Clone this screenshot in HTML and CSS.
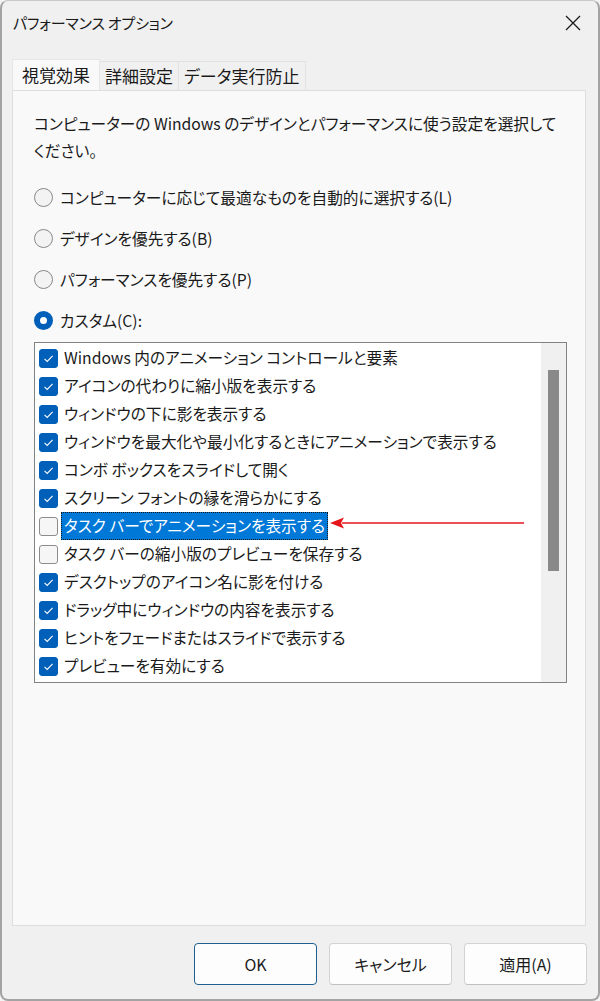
FILE: index.html
```html
<!DOCTYPE html>
<html lang="ja">
<head>
<meta charset="utf-8">
<title>パフォーマンス オプション</title>
<link rel="stylesheet" href="styles.css">
</head>
<body>
<div class="window">
  <div class="titlebar">
    <span class="title">パフォーマンス オプション</span>
    <svg class="close" width="18" height="18" viewBox="0 0 18 18"><path d="M2 2 L16 16 M16 2 L2 16" stroke="#1c1c1c" stroke-width="1.3" fill="none"/></svg>
  </div>
  <div class="tabs">
    <div class="tab active">視覚効果</div>
    <div class="tab">詳細設定</div>
    <div class="tab">データ実行防止</div>
  </div>
  <div class="panel">
    <p class="desc">コンピューターの Windows のデザインとパフォーマンスに使う設定を選択して<br>ください。</p>
    <div class="radios">
      <div class="radio-row"><span class="radio"></span><span>コンピューターに応じて最適なものを自動的に選択する(L)</span></div>
      <div class="radio-row"><span class="radio"></span><span>デザインを優先する(B)</span></div>
      <div class="radio-row"><span class="radio"></span><span>パフォーマンスを優先する(P)</span></div>
      <div class="radio-row"><span class="radio checked"></span><span>カスタム(C):</span></div>
    </div>
    <div class="listbox">
      <div class="items">
        <div class="item"><span class="cb on"><svg width="19" height="19" viewBox="0 0 19 19"><path d="M5.5 9.8 L8.2 12.4 L13.6 6.8" stroke="#fff" stroke-width="1.1" fill="none"/></svg></span><span class="lbl">Windows 内のアニメーション コントロールと要素</span></div>
        <div class="item"><span class="cb on"><svg width="19" height="19" viewBox="0 0 19 19"><path d="M5.5 9.8 L8.2 12.4 L13.6 6.8" stroke="#fff" stroke-width="1.1" fill="none"/></svg></span><span class="lbl">アイコンの代わりに縮小版を表示する</span></div>
        <div class="item"><span class="cb on"><svg width="19" height="19" viewBox="0 0 19 19"><path d="M5.5 9.8 L8.2 12.4 L13.6 6.8" stroke="#fff" stroke-width="1.1" fill="none"/></svg></span><span class="lbl">ウィンドウの下に影を表示する</span></div>
        <div class="item"><span class="cb on"><svg width="19" height="19" viewBox="0 0 19 19"><path d="M5.5 9.8 L8.2 12.4 L13.6 6.8" stroke="#fff" stroke-width="1.1" fill="none"/></svg></span><span class="lbl">ウィンドウを最大化や最小化するときにアニメーションで表示する</span></div>
        <div class="item"><span class="cb on"><svg width="19" height="19" viewBox="0 0 19 19"><path d="M5.5 9.8 L8.2 12.4 L13.6 6.8" stroke="#fff" stroke-width="1.1" fill="none"/></svg></span><span class="lbl">コンボ ボックスをスライドして開く</span></div>
        <div class="item"><span class="cb on"><svg width="19" height="19" viewBox="0 0 19 19"><path d="M5.5 9.8 L8.2 12.4 L13.6 6.8" stroke="#fff" stroke-width="1.1" fill="none"/></svg></span><span class="lbl">スクリーン フォントの縁を滑らかにする</span></div>
        <div class="item"><span class="cb"></span><span class="lbl selected">タスク バーでアニメーションを表示する</span></div>
        <div class="item"><span class="cb"></span><span class="lbl">タスク バーの縮小版のプレビューを保存する</span></div>
        <div class="item"><span class="cb on"><svg width="19" height="19" viewBox="0 0 19 19"><path d="M5.5 9.8 L8.2 12.4 L13.6 6.8" stroke="#fff" stroke-width="1.1" fill="none"/></svg></span><span class="lbl">デスクトップのアイコン名に影を付ける</span></div>
        <div class="item"><span class="cb on"><svg width="19" height="19" viewBox="0 0 19 19"><path d="M5.5 9.8 L8.2 12.4 L13.6 6.8" stroke="#fff" stroke-width="1.1" fill="none"/></svg></span><span class="lbl">ドラッグ中にウィンドウの内容を表示する</span></div>
        <div class="item"><span class="cb on"><svg width="19" height="19" viewBox="0 0 19 19"><path d="M5.5 9.8 L8.2 12.4 L13.6 6.8" stroke="#fff" stroke-width="1.1" fill="none"/></svg></span><span class="lbl">ヒントをフェードまたはスライドで表示する</span></div>
        <div class="item"><span class="cb on"><svg width="19" height="19" viewBox="0 0 19 19"><path d="M5.5 9.8 L8.2 12.4 L13.6 6.8" stroke="#fff" stroke-width="1.1" fill="none"/></svg></span><span class="lbl">プレビューを有効にする</span></div>
        <svg class="arrow" width="196" height="14" viewBox="0 0 196 14"><path d="M12 7 L194 7" stroke="#e4161c" stroke-width="1.6"/><path d="M0 7 L14 1.5 L11 7 L14 12.5 Z" fill="#e4161c"/></svg>
      </div>
      <div class="scrollbar"><div class="thumb"></div></div>
    </div>
  </div>
  <div class="footer">
    <button class="btn primary">OK</button>
    <button class="btn">キャンセル</button>
    <button class="btn">適用(A)</button>
  </div>
</div>
</body>
</html>
```
FILE: styles.css
```css
* { box-sizing: border-box; }
html, body { margin: 0; padding: 0; }
body {
  background: #f3f3f3;
  font-family: "Noto Sans CJK JP", "Noto Sans", sans-serif;
  font-feature-settings: "palt";
  color: #1a1a1a;
}
.window {
  width: 600px;
  height: 1001px;
  background: #f0f0f0;
  border: 2px solid #a3a3a3;
  border-top: 1px solid #c8c8c8;
  border-radius: 8px;
  display: flex;
  flex-direction: column;
}
.titlebar {
  height: 43px;
  display: flex;
  align-items: center;
  justify-content: space-between;
  padding: 0 16px 0 11px;
}
.title { font-size: 15px; letter-spacing: -0.2px; }
.close { display: block; }
.tabs {
  display: flex;
  align-items: flex-end;
  margin: 16px 0 0 10px;
  height: 30px;
}
.tab {
  font-size: 17px;
  height: 29px;
  line-height: 28px;
  padding: 0 5px;
  background: #f0f0f0;
  border: 1px solid #e2e2e2;
  border-bottom: none;
  margin-left: -1px;
}
.tab.active {
  height: 31px;
  line-height: 30px;
  padding: 0 9px;
  background: #f9f9f9;
  border-color: #e6e6e6;
  position: relative;
  z-index: 1;
  margin-left: 0;
}
.panel {
  margin: 0 12px 0 10px;
  height: 836px;
  background: #f9f9f9;
  border: 1px solid #dedede;
  padding: 19px 10px 0 21px;
}
.desc {
  margin: 0;
  font-size: 15.7px;
  line-height: 27px;
  white-space: nowrap;
}
.radios {
  margin-top: 13px;
  display: flex;
  flex-direction: column;
}
.radio-row {
  height: 41px;
  display: flex;
  align-items: center;
  gap: 7px;
  font-size: 15.7px;
  white-space: nowrap;
}
.radio {
  width: 19px;
  height: 19px;
  border-radius: 50%;
  border: 1px solid #878787;
  background: #f3f3f3;
  flex: none;
}
.radio.checked {
  border: 6px solid #005fb8;
  background: #ffffff;
}
.listbox {
  margin-top: 1px;
  width: 533px;
  height: 341px;
  background: #ffffff;
  border: 1px solid #828282;
  display: flex;
}
.items {
  flex: 1;
  position: relative;
  padding-top: 1px;
}
.item {
  height: 28px;
  display: flex;
  align-items: center;
  padding-left: 4px;
  font-size: 15.7px;
  white-space: nowrap;
}
.cb {
  width: 19px;
  height: 19px;
  border-radius: 3px;
  border: 1px solid #8c8c8c;
  background: #f6f6f6;
  flex: none;
  display: flex;
}
.cb.on {
  background: #005fb8;
  border-color: #005fb8;
}
.cb.on svg { margin: -1px; }
.lbl {
  margin-left: 3px;
  padding: 0 2px;
  line-height: 26px;
  border: 1px dotted transparent;
}
.lbl.selected {
  background: #0078d7;
  color: #ffffff;
  border: 1px dotted #1a1a1a;
}
.arrow {
  position: absolute;
  left: 295px;
  top: 173px;
}
.scrollbar {
  width: 25px;
  height: 100%;
  background: #f0f0f0;
  display: flex;
  justify-content: center;
  padding-top: 27px;
}
.thumb {
  width: 11px;
  height: 201px;
  background: #898989;
}
.footer {
  display: flex;
  justify-content: flex-end;
  gap: 12px;
  padding: 17px 11px 0 0;
}
.btn {
  width: 123px;
  height: 42px;
  font-family: "Noto Sans CJK JP", "Noto Sans", sans-serif;
  font-feature-settings: "palt";
  font-size: 16px;
  color: #1a1a1a;
  background: #fdfdfd;
  border: 1px solid #d3d3d3;
  border-bottom-color: #c0c0c0;
  border-radius: 4px;
  padding: 0;
}
.btn.primary {
  border: 1px solid #1f5f8f;
}
```
